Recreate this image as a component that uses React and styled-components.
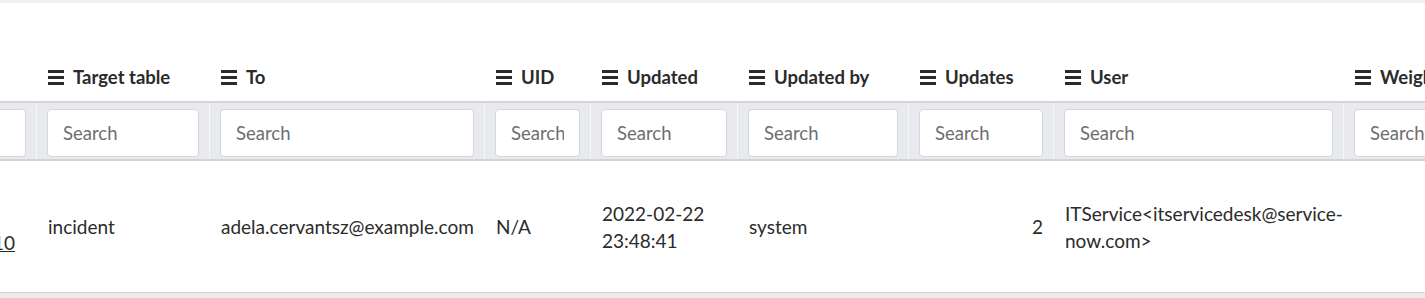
import React from "react";
import styled, { createGlobalStyle } from "styled-components";

const GlobalStyle = createGlobalStyle`
  html, body {
    margin: 0;
    padding: 0;
    background: #ececec;
    overflow: hidden;
  }
  body {
    font-family: Lato, "Liberation Sans", sans-serif;
    color: #2b2b2b;
  }
`;

const COLUMNS = "120px 173px 275px 106px 147px 171px 145px 290px 200px";

const Page = styled("div")`
  background: #fff;
  overflow: hidden;
  border-top: 3px solid #f0f0f0;
`;

const Grid = styled("div")`
  margin-left: -84px;
  width: max-content;
`;

const Row = styled("div")`
  display: grid;
  grid-template-columns: ${COLUMNS};
`;

const HeaderRow = styled(Row)`
  height: 98px;
  align-items: end;
  border-bottom: 2px solid #d4d6d9;
`;

const FilterRow = styled(Row)`
  background: #e8eaed;
  border-bottom: 2px solid #d2d4d7;
`;

const DataRow = styled(Row)`
  height: 131px;
  align-items: center;
  border-bottom: 1px solid #d4d4d4;
`;

const HeaderCell = styled("div")`
  display: flex;
  align-items: center;
  gap: 9px;
  min-height: 27px;
  padding: 0 10px 10px 12px;
  font-size: 18.5px;
  font-weight: 700;
  line-height: 27px;
  white-space: nowrap;
`;

const FilterCell = styled("div")`
  padding: 6px 10px 2px 10px;
  border-left: 1px solid #f6f7f8;
`;

const SearchInput = styled("input")`
  box-sizing: border-box;
  width: 100%;
  height: 48px;
  padding: 0 15px;
  border: 1px solid #d3d6da;
  border-radius: 4px;
  background: #fff;
  font-family: inherit;
  font-size: 18.5px;
  color: #2b2b2b;
  outline: none;

  &::placeholder {
    color: #6e6e6e;
  }
`;

const DataCell = styled("div")`
  padding: 0 10px 0 12px;
  font-size: 19px;
  line-height: 27px;
  text-align: ${(p) => (p.$align === "right" ? "right" : "left")};
`;

const LinkCell = styled(DataCell)`
  padding-top: 32px;
  text-align: right;
  padding-right: 21px;

  a {
    color: #2b2b2b;
    text-decoration: underline;
  }
`;

const BarsIcon = () => (
  <svg width="16" height="15" viewBox="0 0 16 15" aria-hidden="true">
    <rect x="0" y="0" width="16" height="3" fill="#2b2b2b" />
    <rect x="0" y="6" width="16" height="3" fill="#2b2b2b" />
    <rect x="0" y="12" width="16" height="3" fill="#2b2b2b" />
  </svg>
);

const headers = [
  "Target table",
  "To",
  "UID",
  "Updated",
  "Updated by",
  "Updates",
  "User",
  "Weight",
];

export default function App() {
  return (
    <>
      <GlobalStyle />
      <Page>
        <Grid>
          <HeaderRow>
            <HeaderCell />
            {headers.map((h) => (
              <HeaderCell key={h}>
                <BarsIcon />
                {h}
              </HeaderCell>
            ))}
          </HeaderRow>
          <FilterRow>
            <FilterCell>
              <SearchInput placeholder="Search" />
            </FilterCell>
            {headers.map((h) => (
              <FilterCell key={h}>
                <SearchInput placeholder="Search" />
              </FilterCell>
            ))}
          </FilterRow>
          <DataRow>
            <LinkCell>
              <a href="#">010</a>
            </LinkCell>
            <DataCell>incident</DataCell>
            <DataCell>adela.cervantsz@example.com</DataCell>
            <DataCell>N/A</DataCell>
            <DataCell>2022-02-22 23:48:41</DataCell>
            <DataCell>system</DataCell>
            <DataCell $align="right">2</DataCell>
            <DataCell>ITService&lt;itservicedesk@service-now.com&gt;</DataCell>
            <DataCell />
          </DataRow>
        </Grid>
      </Page>
    </>
  );
}
